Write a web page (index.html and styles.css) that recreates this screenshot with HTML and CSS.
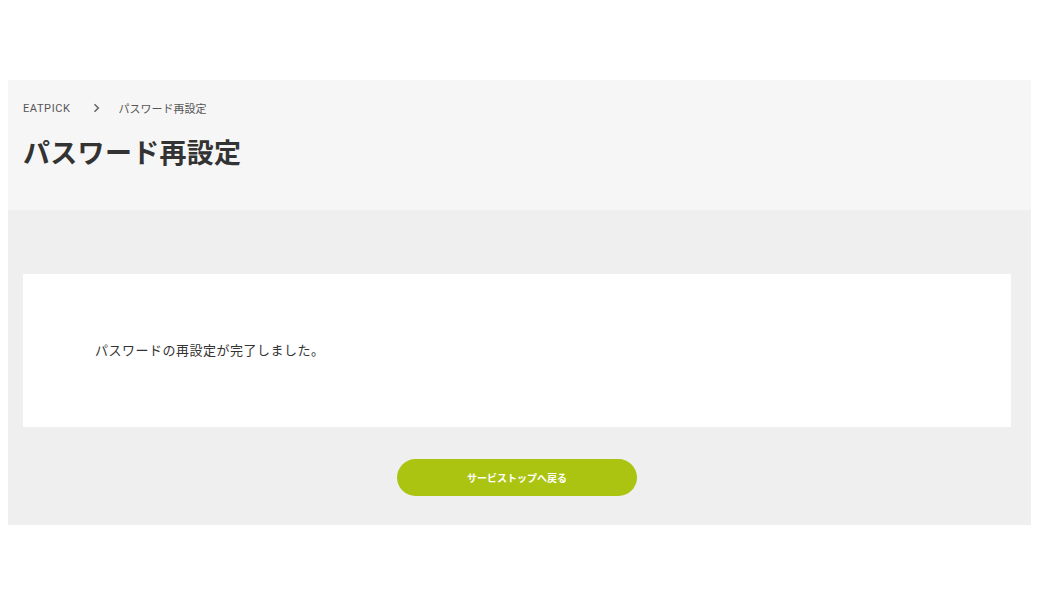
FILE: index.html
```html
<!DOCTYPE html>
<html lang="ja">
<head>
<meta charset="utf-8">
<title>パスワード再設定</title>
<link rel="stylesheet" href="styles.css">
</head>
<body>
<div class="page">
  <header class="head">
    <nav class="crumbs">
      <span class="crumb-home">EATPICK</span>
      <svg class="chev" width="7" height="10" viewBox="0 0 7 10"><path d="M1.5 1.2 L5.3 5 L1.5 8.8" fill="none" stroke="#666" stroke-width="1.6"/></svg>
      <span class="crumb-cur">パスワード再設定</span>
    </nav>
    <h1 class="title">パスワード再設定</h1>
  </header>
  <main class="body">
    <section class="card">
      <p class="msg">パスワードの再設定が完了しました。</p>
    </section>
    <div class="actions">
      <a class="btn" href="#">サービストップへ戻る</a>
    </div>
  </main>
</div>
</body>
</html>
```
FILE: styles.css
```css
html, body {
  margin: 0;
  padding: 0;
  background: #fff;
}
body {
  font-family: Roboto, "Noto Sans CJK JP", sans-serif;
  color: #333;
}
.page {
  padding: 80px 8px 0;
}
.head {
  background: #f6f6f6;
  height: 130px;
  box-sizing: border-box;
  padding: 20px 15px 0;
}
.crumbs {
  display: flex;
  align-items: center;
  height: 16px;
  font-size: 11px;
  color: #555;
}
.crumb-home {
  letter-spacing: 0.6px;
  color: #555;
}
.chev {
  margin: 0 19px 0 22px;
}
.crumb-cur {
  font-family: "Noto Sans CJK JP", sans-serif;
  font-size: 11px;
}
.title {
  margin: 17px 0 0;
  font-family: "Noto Sans CJK JP", sans-serif;
  font-size: 27px;
  line-height: 38px;
  font-weight: 700;
  color: #333;
  letter-spacing: 0.3px;
}
.body {
  background: #efefef;
  height: 315px;
  box-sizing: border-box;
  padding: 64px 20px 0 15px;
}
.card {
  background: #fff;
  height: 153px;
  box-sizing: border-box;
  display: flex;
  align-items: center;
  padding: 0 72px 2px;
}
.msg {
  margin: 0;
  font-family: "Noto Sans CJK JP", sans-serif;
  font-size: 13px;
  color: #333;
  letter-spacing: 0.5px;
}
.actions {
  display: flex;
  justify-content: center;
  margin-top: 32px;
}
.btn {
  display: flex;
  align-items: center;
  justify-content: center;
  width: 240px;
  height: 37px;
  border-radius: 19px;
  background: #abc412;
  color: #fff;
  font-family: "Noto Sans CJK JP", sans-serif;
  font-size: 10px;
  font-weight: 700;
  text-decoration: none;
}
```
